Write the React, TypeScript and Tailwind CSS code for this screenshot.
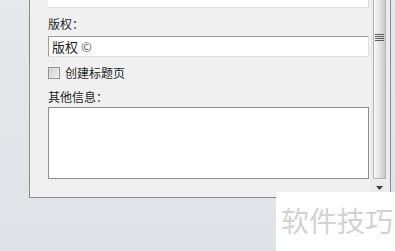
import React from "react";

const cjk = { fontFamily: '"Microsoft YaHei", "Noto Sans CJK SC", "Liberation Sans", sans-serif' };

export default function App() {
  return (
    <div
      className="relative w-[395px] h-[251px] overflow-hidden bg-gradient-to-b from-[#e6e8eb] to-[#dfe2e6] text-[12px] text-[#1e1e1e]"
      style={cjk}
    >
      {/* panel */}
      <div className="ml-[29px] w-[362px] h-[198px] border-l border-b border-r border-[#8a8a8a] bg-[#f0f0f0] flex">
        <div className="flex-1 pl-[18px] pr-[2px]">
          {/* cut-off textbox at top */}
          <div className="h-[8px] bg-white border-b border-r border-[#dadada]" />

          <div className="mt-[9px] h-[14px] leading-[14px]">版权：</div>

          <div className="mt-[5px] h-[21px] bg-white border-t border-l border-[#9a9a9a] border-r border-b border-r-[#e2e2e2] border-b-[#e2e2e2] pl-[3px] leading-[20px] text-[13px]">
            版权 <span className="text-[#555] text-[13px]">©</span>
          </div>

          <div className="mt-[9px] flex items-center gap-[5px] h-[14px]">
            <div className="w-[12px] h-[12px] border border-[#8e8f8f] bg-gradient-to-br from-[#dcdcdc] to-[#f6f6f6] flex items-center justify-center">
              <div className="w-[8px] h-[8px] bg-gradient-to-br from-[#d0d0d0] to-[#eeeeee]" />
            </div>
            <span className="leading-[14px]">创建标题页</span>
          </div>

          <div className="mt-[10px] h-[14px] leading-[14px]">其他信息：</div>

          <div className="mt-[3px] h-[72px] bg-white border border-[#8f8f8f]" />
        </div>

        {/* scrollbar */}
        <div className="w-[19px] h-full flex flex-col items-stretch border-l border-[#e8e8e8] bg-[#ececec] pl-[1px]">
          <div className="relative h-[179px] w-[13px] border border-[#b5b5b5] border-t-0 bg-gradient-to-r from-[#f7f7f7] via-[#e4e4e4] to-[#c9c9c9]">
            <div className="absolute left-[1px] top-[34px] w-[9px] flex flex-col gap-[1px]">
              <div className="h-[1px] bg-[#5c5c5c]" />
              <div className="h-[1px] bg-[#5c5c5c]" />
              <div className="h-[1px] bg-[#5c5c5c]" />
              <div className="h-[1px] bg-[#5c5c5c]" />
            </div>
          </div>
          <div className="flex justify-center pt-[7px] pr-[4px]">
            <svg width="7" height="4" viewBox="0 0 7 4">
              <path d="M0 0 H7 L3.5 4 Z" fill="#3c3c3c" />
            </svg>
          </div>
        </div>
      </div>

      {/* watermark */}
      <div className="absolute left-[276px] top-[192px] w-[119px] h-[59px] bg-white flex items-start pl-[5px] pt-[12px]">
        <span className="text-[28px] leading-[32px] text-[#d2d2d2]" style={cjk}>
          软件技巧
        </span>
      </div>
    </div>
  );
}
